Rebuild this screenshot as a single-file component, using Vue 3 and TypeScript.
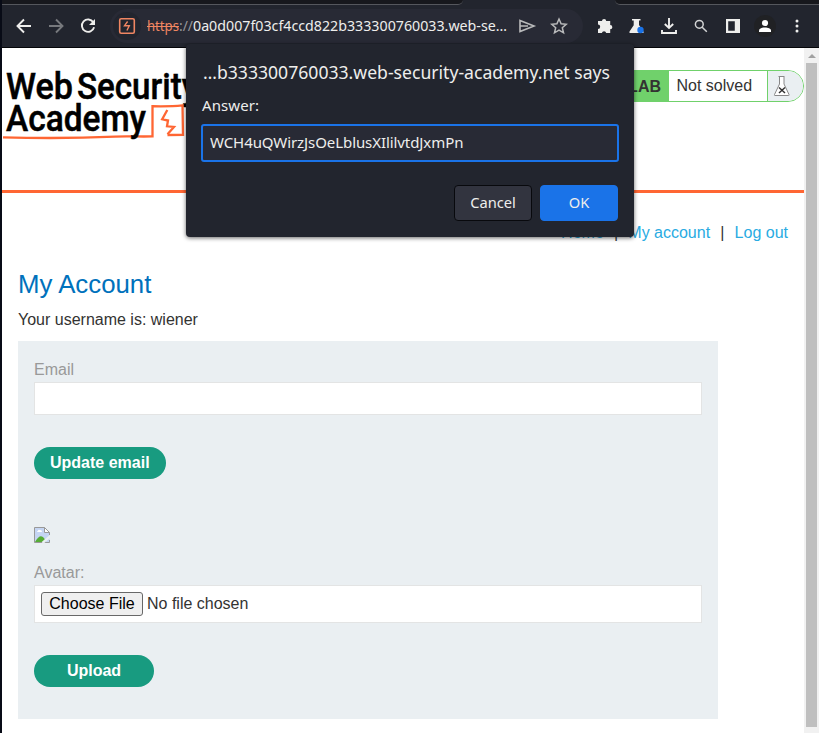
<script setup lang="ts">
import { ref } from 'vue'

const host = '0a0d007f03cf4ccd822b333300760033.web-se…'
const answer = ref('WCH4uQWirzJsOeLblusXIlilvtdJxmPn')
const email = ref('')
const links = ['Home', 'My account', 'Log out']
</script>

<template>
  <div class="window">
    <div class="tabs"><span class="tab-left"></span><span class="tab-right"></span></div>
    <header class="toolbar">
      <svg class="icon back" viewBox="0 0 20 20"><path d="M17 10H4M10 3.500 3.500 10l6.500 6.500" /></svg>
      <svg class="icon forward" viewBox="0 0 20 20"><path d="M3 10h13M10 3.500 16.500 10 10 16.500" /></svg>
      <svg class="icon reload" viewBox="0 0 20 20"><path d="M15.300 6.200A6.200 6.200 0 1 0 16.100 11.300" /><path class="solid" d="M17 3v6h-6z" /></svg>
      <div class="address">
        <span class="site"><svg viewBox="0 0 18 18"><rect x="1.700" y="1.700" width="14.600" height="14.600" rx="1.500" /><path class="bolt" d="M9.600 4.500 6.500 8.700h4.800L8.900 13.500" /></svg></span>
        <div class="url"><svg width="362" height="24"><text class="scheme" x="0" y="17" textLength="32" lengthAdjust="spacingAndGlyphs">https</text><path class="strike" d="M0 12.500h32" /><text class="slashes" x="32" y="17" textLength="14" lengthAdjust="spacingAndGlyphs">://</text><text x="46" y="17" textLength="314" lengthAdjust="spacingAndGlyphs">{{ host }}</text></svg></div>
        <svg class="icon send" viewBox="0 0 20 20"><path d="M3 4.500 17 10 3 15.500zM3 10h8" /></svg>
        <svg class="icon star" viewBox="0 0 20 20"><path d="m10 3 2.100 4.800 5.100.500-3.900 3.400 1.200 5.100L10 14.100l-4.500 2.700 1.200-5.100-3.900-3.400 5.100-.500z" /></svg>
      </div>
      <div class="actions">
        <svg class="icon solid" viewBox="0 0 20 20"><path d="M3 5h4a2.100 2.100 0 0 1 4.200 0h4v4a2.100 2.100 0 0 1 0 4.300V17h-4a2.200 2.200 0 0 0-4.300 0H3v-4a2.200 2.200 0 0 0 0-4.400z" /></svg>
        <svg class="icon solid" viewBox="0 0 20 20"><path d="M5 3h8.500v1.500H12v4.600l4.500 6.600V17h-14v-1.500l4.200-6.300V4.500H5z" /><circle cx="13.500" cy="14" r="3.200" class="dot" /></svg>
        <svg class="icon download" viewBox="0 0 20 20"><path d="M10 2v10M5.800 8 10 12l4.200-4M3 14v3h14v-3" /></svg>
        <svg class="icon search" viewBox="0 0 20 20"><circle cx="8.300" cy="8.300" r="3.900" /><path d="m11.200 11.200 4.600 4.600" /></svg>
        <svg class="icon solid" viewBox="0 0 20 20"><path fill-rule="evenodd" d="M3 3h14v14H3zM5.200 5.200v9.600h6.600V5.200z" /></svg>
        <span class="person"><svg viewBox="0 0 22 22"><circle cx="11" cy="8" r="3.100" /><path d="M5 17v-1.500c0-4 12-4 12 0V17z" /></svg></span>
        <svg class="icon solid" viewBox="0 0 20 20"><circle cx="10" cy="5" r="1.500" /><circle cx="10" cy="10" r="1.500" /><circle cx="10" cy="15" r="1.500" /></svg>
      </div>
    </header>

    <div class="viewport">
      <main class="page">
        <div class="banner">
          <svg class="logo" width="200" height="80" viewBox="0 0 200 80" aria-label="Web Security Academy">
            <text x="4" y="30.500" textLength="67" lengthAdjust="spacingAndGlyphs">Web</text>
            <text x="75" y="30.500" textLength="121" lengthAdjust="spacingAndGlyphs">Security</text>
            <path d="M1 69.300c34 1 78 .800 112-.700 12-.600 24 .200 37.500-.200V38.200c10 .200 20 .200 30-.800l.500 29.500-15.500.100" />
            <path d="m165.300 42-5.100 9.300 5.800 1.200-1 5.800 7 .600-6.500 7.400" />
            <text x="4" y="63" textLength="140" lengthAdjust="spacingAndGlyphs">Academy</text>
          </svg>
          <div class="lab">
            <strong>LAB</strong>
            <span class="status">Not solved</span>
            <span class="flask"><svg width="18" height="22" viewBox="0 0 18 22"><path class="glass" d="M5.500 1.500h6M6.500 2v7L1.500 19.500q-.500 1 .500 1h13.500q1 0 .500-1L11 9V2" /><path class="cross" d="m6 12.500 6 5.500m0-5.500-6 5.500" /></svg></span>
          </div>
        </div>
        <nav class="links">
          <template v-for="(link, i) in links" :key="link"><i v-if="i">|</i><a>{{ link }}</a></template>
        </nav>
        <section class="account">
          <h1>My Account</h1>
          <p>Your username is: wiener</p>
          <div class="panel">
            <form @submit.prevent>
              <label>Email</label>
              <input v-model="email" class="field" type="text">
              <button class="pill">Update email</button>
            </form>
            <svg class="broken" width="16" height="16" viewBox="0 0 16 16">
              <path class="sky" d="M.5.5h10l5 5v10H.5z" />
              <path class="hill" d="M1 15q5-9 9-4l2 4z" />
              <path class="cloud" d="M3 5h5q0-2-2-2-2-1-2 1-1 0-1 1zM10.500.500v5h5z" />
              <path class="edge" d="M15.500 8V5.500l-5-5H.5v15h15V13M10.500.500v5h5" />
              <path class="tear" d="m8.500 16 8-7" />
            </svg>
            <form @submit.prevent>
              <label>Avatar:</label>
              <div class="file"><button type="button">Choose File</button><span>No file chosen</span></div>
              <button class="pill upload">Upload</button>
            </form>
          </div>
        </section>
      </main>
      <div class="scrollbar"><span class="arrow"></span><span class="thumb"></span></div>
    </div>

    <div class="dialog" role="dialog">
      <svg class="title" width="410" height="26"><text x="0" y="18" textLength="407" lengthAdjust="spacingAndGlyphs">…b333300760033.web-security-academy.net says</text></svg>
      <div class="prompt">Answer:</div>
      <input v-model="answer" class="answer" type="text">
      <div class="buttons"><button>Cancel</button><button class="ok">OK</button></div>
    </div>
  </div>
</template>

<style>
body { margin: 0; overflow: hidden; }
</style>

<style scoped>
* { box-sizing: border-box; }
.window { position: relative; display: flex; flex-direction: column; width: 819px; height: 733px; padding-left: 2px; background: #080b16; font: 16px/24px "Liberation Sans", Arial, sans-serif; color: #333332; overflow: hidden; }
.tabs { display: flex; justify-content: space-between; height: 5px; background: #22252e; }
.tabs span { height: 5px; background: #17181d; border-bottom: 1px solid #55575d; }
.tab-left { width: 461px; border-bottom-right-radius: 5px; }
.tab-right { width: 204px; border-bottom-left-radius: 5px; }
.toolbar { display: flex; align-items: center; height: 43px; padding: 0 12px; background: #22252e; border-bottom: 1px solid #050609; }
.icon { width: 20px; height: 20px; flex: none; fill: none; stroke: #eeeeec; stroke-width: 1.900; }
.icon.solid, .icon .solid { fill: #eeeeec; stroke: none; }
.icon .dot { fill: #1a73e8; }
.forward { margin-left: 12px; stroke: #77797d; }
.reload { margin-left: 12px; }
.address { display: flex; flex: none; align-items: center; width: 473px; height: 34px; margin-left: 12px; padding-left: 3px; border-radius: 17px; background: #282a35; }
.site { display: grid; place-items: center; width: 28px; height: 28px; border-radius: 50%; background: #22252e; }
.site svg { width: 18px; height: 18px; fill: none; stroke: #f08662; stroke-width: 1.600; }
.site .bolt { stroke-width: 1.400; }
.url { width: 362px; height: 24px; margin-left: 6px; }
.url svg { display: block; fill: #eeeeec; font: 15px "Noto Sans", sans-serif; }
.url .scheme { fill: #f08662; }
.url .slashes { fill: #969799; }
.strike { stroke: #f08662; stroke-width: 1; }
.send { margin-left: 8px; stroke: #b9babb; stroke-width: 1.600; }
.star { margin-left: 12px; stroke: #b9babb; stroke-width: 1.500; }
.actions { display: flex; align-items: center; justify-content: space-between; width: 212px; margin-left: 12px; flex: none; }
.search { stroke: #d3d4d5; stroke-width: 1.500; }
.person { display: grid; place-items: center; width: 22px; height: 22px; margin: 0 -1px; border-radius: 50%; background: #202124; }
.person svg { width: 22px; height: 22px; fill: #fff; }
.viewport { display: flex; flex: 1; min-height: 0; }
.page { width: 802px; background: #fff; }
.banner { display: flex; justify-content: space-between; align-items: flex-start; height: 145px; padding-top: 20px; border-bottom: 3px solid #ff6633; }
.logo { fill: #000; stroke: #000; stroke-width: 0.500; font: 500 36.500px Roboto, sans-serif; }
.logo path { fill: none; stroke: #ff6633; stroke-width: 2.300; }
.lab { display: flex; height: 32px; margin-top: 2px; border: 1px solid #70d16b; border-radius: 0 16px 16px 0; overflow: hidden; }
.lab strong { width: 150px; padding-right: 8px; background: #70d16b; text-align: right; line-height: 31px; }
.status { width: 98px; padding-left: 7.500px; line-height: 29px; }
.flask { display: flex; justify-content: center; align-items: center; width: 36px; padding-right: 7px; border-left: 1px solid #70d16b; background: #eaeff2; }
.glass { fill: #fff; stroke: #888; }
.cross { fill: none; stroke: #333; stroke-width: 1.500; }
.links { display: flex; justify-content: flex-end; padding: 28px 16px 0; color: #29abe2; }
.links i { width: 24.500px; text-align: center; font-style: normal; color: #333332; }
.account { padding: 20px 16px 0; }
h1 { margin: 0; color: #0071bc; font-size: 25.800px; font-weight: 400; line-height: 38px; }
p { margin: 5px 0 9px; }
.panel { display: flex; flex-direction: column; width: 700px; height: 378px; padding: 16px; background: #eaeff2; }
form { display: flex; flex-direction: column; align-items: flex-start; }
label { height: 25px; color: #999; line-height: 26px; }
.field { width: 668px; height: 33px; padding: 0 8px; border: 1px solid #e3e4e4; outline: none; background: #fff; }
.pill { height: 32px; margin-top: 32px; padding: 0 16px 1px; border: 0; border-radius: 16px; background: #189b80; color: #fff; font: bold 16px/31px "Liberation Sans", Arial, sans-serif; }
.upload { width: 120px; }
.broken { margin: 48px 0 17px; }
.sky { fill: #c5d5f3; }
.hill { fill: #56ad36; }
.cloud { fill: #fff; }
.edge { fill: none; stroke: #999; }
.tear { stroke: #eaeff2; stroke-width: 2.500; }
.file { display: flex; align-items: center; width: 668px; height: 38px; padding: 0 6px 1px; border: 1px solid #e3e4e4; background: #fff; }
.file button { width: 102px; height: 24px; padding: 0; border: 1px solid #686868; border-radius: 3px; background: #efefef; color: #000; font: 16px/22px "Liberation Sans", Arial, sans-serif; }
.file span { margin-left: 4px; }
.scrollbar { display: flex; flex-direction: column; align-items: center; width: 15px; background: #f1f1f1; }
.arrow { width: 0; height: 0; margin: 6px 0 5px; border: solid transparent; border-width: 0 4px 4px; border-bottom-color: #a1a1a1; }
.thumb { width: 11px; height: 664px; background: #bfbfbf; }
.dialog { position: absolute; left: 186px; top: 44px; width: 448px; height: 192.500px; padding: 16px; border-radius: 4px; background: #22252e; color: #eeeeec; font: 15px/20px "Noto Sans", sans-serif; box-shadow: 0 1px 4px #0009; }
.title { display: block; margin: 1px 0 0 1px; fill: #eeeeec; font: 17.300px "Noto Sans", sans-serif; }
.prompt { height: 29px; margin-top: 8px; letter-spacing: 0.100px; }
.answer { display: block; width: 418px; height: 38px; margin: 0 0 0 -1px; padding: 0 7px 2px; border: 2px solid #1a73e8; border-radius: 3px; outline: none; background: #282a35; color: #eeeeec; font: 15px "Noto Sans", sans-serif; letter-spacing: -0.080px; }
.buttons { display: flex; justify-content: flex-end; gap: 8px; margin-top: 23px; }
.buttons button { width: 78px; height: 36px; padding: 0 0 2px; border: 1px solid #08090d; border-radius: 4px; background: #32343f; color: #eeeeec; font: 14.700px "Noto Sans", sans-serif; }
.buttons .ok { border-color: #1a73e8; background: #1a73e8; }
</style>
